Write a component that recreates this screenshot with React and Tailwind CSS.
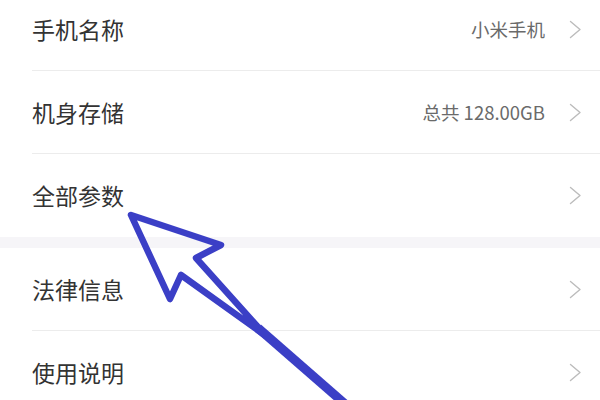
import React from 'react';

const rows = [
    { label: '手机名称', value: '小米手机' },
    { label: '机身存储', value: '总共 128.00GB' },
    { label: '全部参数', value: '', last: true },
];

const rows2 = [
    { label: '法律信息', value: '' },
    { label: '使用说明', value: '' },
];

function Chevron() {
    return (
        <svg width="13" height="19" viewBox="0 0 13 19" className="shrink-0">
            <polyline points="1.5,1.5 11,9.5 1.5,17.5" fill="none" stroke="#bcbcbc" strokeWidth="1.4" strokeLinejoin="round" strokeLinecap="round" />
        </svg>
    );
}

function Row({ label, value, last }) {
    return (
        <div className={`ml-[32px] h-[83px] flex items-center pr-[18px] ${last ? '' : 'border-b border-[#ececec]'}`}>
            <span className="flex-1 text-[23px] text-[#333333] leading-none">{label}</span>
            {value && <span className="text-[18.5px] text-[#6a6a6a] leading-none mr-[24px]">{value}</span>}
            <Chevron />
        </div>
    );
}

export default function App() {
    return (
        <div
            className="relative w-[600px] h-[400px] overflow-hidden bg-white"
            style={{ fontFamily: '"Noto Sans CJK SC", "Noto Sans", sans-serif' }}
        >
            <div className="-mt-[12px]">
                {rows.map((r) => <Row key={r.label} {...r} />)}
                <div className="h-[11px] bg-[#f6f5f8]" />
                {rows2.map((r) => <Row key={r.label} {...r} />)}
            </div>

            {/* annotation arrow */}
            <svg className="absolute inset-0 pointer-events-none" width="600" height="400" viewBox="0 0 600 400">
                <polygon
                    points="131,215 221,245 196,258 266,336 181,275 170,299"
                    fill="none"
                    stroke="#3b3fc6"
                    strokeWidth="6.5"
                    strokeLinejoin="round"
                />
                <line x1="258" y1="328" x2="352" y2="410" stroke="#3b3fc6" strokeWidth="9" />
            </svg>
        </div>
    );
}
